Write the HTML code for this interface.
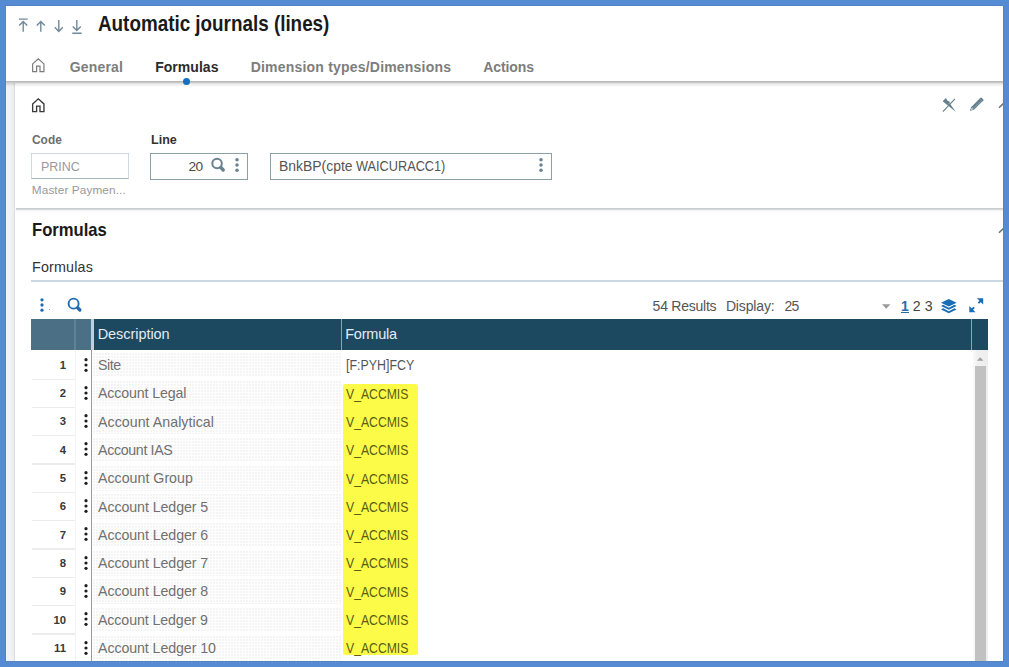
<!DOCTYPE html>
<html lang="en"><head><meta charset="utf-8"><title>Automatic journals (lines)</title>
<style>
html,body{margin:0;padding:0}
body{width:1009px;height:667px;overflow:hidden;background:#548bd2;position:relative;font-family:"Liberation Sans",sans-serif;}
#frame{position:absolute;left:6px;top:6px;width:997px;height:655px;background:#fff;overflow:hidden;box-shadow:0 0 0 1px #5584c5}
#page{position:absolute;left:-6px;top:-6px;width:1009px;height:667px}
.abs{position:absolute}
.t{position:absolute;white-space:pre;color:#333}
.b{font-weight:bold}
h1,h2{margin:0;padding:0}
svg{position:absolute;overflow:visible}
.dots{background-color:#fff;background-image:radial-gradient(circle at 1px 1px,#e2e2e2 0.45px,rgba(226,226,226,0) 0.85px);background-size:3px 3px}
</style></head><body>
<div id="frame"><div id="page">

<div class="abs" style="left:6px;top:6px;width:997px;height:76px;background:#fff"></div>
<div class="abs" style="left:6px;top:82px;width:997px;height:585px;background:linear-gradient(90deg,#edf4f9 0,#f1f2f7 2px,#f1f2f6 6px,#eaeded 7.5px)"></div>
<div class="abs" style="left:14.1px;top:83px;width:1000px;height:125.5px;background:#fff;border-left:1.8px solid #dcdfe2"></div>
<div class="abs" style="left:14.1px;top:210px;width:1000px;height:460px;background:#fff;border-left:1.8px solid #dcdfe2"></div>
<div class="abs" style="left:6px;top:80.8px;width:997px;height:1.4px;background:#bababa"></div>
<div class="abs" style="left:6px;top:82.2px;width:997px;height:4.5px;background:linear-gradient(rgba(0,0,0,.18),rgba(0,0,0,.07) 50%,rgba(0,0,0,0))"></div>
<div class="abs" style="left:16px;top:207.8px;width:990px;height:1.4px;background:#cacdd0"></div>
<div class="abs" style="left:16px;top:209.2px;width:990px;height:3px;background:linear-gradient(rgba(0,0,0,.10),rgba(0,0,0,0))"></div>
<svg style="left:17px;top:17px" width="70" height="18" viewBox="17 17 70 18" fill="none" stroke="#71899a" stroke-width="1.4" stroke-linecap="butt">
<path d="M18.9 19.1h8.7M23.2 21.3v10.5M19.2 25.5l4-4.1 4 4.1"/>
<path d="M40.8 21.3v10.4M36.8 25.5l4-4.1 4 4.1"/>
<path d="M58.8 20v11.2M54.8 27.3l4 4.1 4-4.1"/>
<path d="M76.8 20v10.4M72.8 26.5l4 4.1 4-4.1M72.3 33.3h9.3"/>
</svg>
<h1 class="t b" style="left:98.3px;top:11.80px;font-size:21.2px;line-height:24px;transform:scaleX(0.8893);transform-origin:0 50%;color:#1a1a1a;">Automatic journals (lines)</h1>
<svg style="left:32.3px;top:57.65px" width="12.6" height="14.3" viewBox="0 0 12.6 14.3" fill="none" stroke="#7c7c7c" stroke-width="1.2" stroke-linejoin="miter"><path d="M0.65 5.9L6.3 0.85 11.95 5.9V13.65H8V8.2H4.6V13.65H0.65z"/></svg>
<div class="t b" style="left:69.7px;top:57.30px;font-size:14.0px;line-height:20px;letter-spacing:0.194px;color:#7d7d7d">General</div>
<div class="t b" style="left:155.2px;top:57.30px;font-size:14.0px;line-height:20px;letter-spacing:0.041px;color:#2b2b2b">Formulas</div>
<div class="t b" style="left:250.7px;top:57.30px;font-size:14.0px;line-height:20px;letter-spacing:0.201px;color:#7d7d7d">Dimension types/Dimensions</div>
<div class="t b" style="left:483.2px;top:57.30px;font-size:14.0px;line-height:20px;letter-spacing:-0.090px;color:#7d7d7d">Actions</div>
<div class="abs" style="left:182.7px;top:78.3px;width:7.2px;height:7.2px;border-radius:50%;background:#1470bd"></div>
<svg style="left:32.2px;top:97.7px" width="12.6" height="14.3" viewBox="0 0 12.6 14.3" fill="none" stroke="#3a3a3a" stroke-width="1.35" stroke-linejoin="miter"><path d="M0.65 5.9L6.3 0.85 11.95 5.9V13.65H8V8.2H4.6V13.65H0.65z"/></svg>
<div class="t b" style="left:31.9px;top:129.80px;font-size:13.6px;line-height:20px;transform:scaleX(0.8764);transform-origin:0 50%;color:#6e6e6e;">Code</div>
<div class="t b" style="left:151.3px;top:129.80px;font-size:13.6px;line-height:20px;transform:scaleX(0.9228);transform-origin:0 50%;color:#333;">Line</div>
<div class="abs" style="left:31px;top:153.2px;width:95.6px;height:23.4px;border:1px solid #d0d9de;border-bottom:1.8px solid #a6b6be;background:#fff"></div>
<div class="abs" style="left:150.4px;top:153px;width:95.6px;height:25px;border:1px solid #8a9fa9;background:#fff"></div>
<div class="abs" style="left:270px;top:153px;width:279.5px;height:25px;border:1px solid #8a9fa9;background:#fff"></div>
<div class="t " style="left:40.5px;top:156.80px;font-size:13.7px;line-height:20px;transform:scaleX(0.9126);transform-origin:0 50%;color:#9a9a9a;">PRINC</div>
<div class="t " style="left:188.6px;top:156.80px;font-size:13.7px;line-height:20px;letter-spacing:-0.739px;color:#4a4a4a">20</div>
<span class="t " style="left:279.4px;top:156.30px;font-size:13.9px;line-height:20px;transform:scaleX(1.0031);transform-origin:0 50%;color:#555;">BnkBP(cpte </span>
<span class="t " style="left:355.6px;top:156.30px;font-size:13.9px;line-height:20px;transform:scaleX(0.9164);transform-origin:0 50%;color:#555;">WAICURACC1)</span>
<div class="t " style="left:31.8px;top:180.30px;font-size:11.8px;line-height:20px;letter-spacing:0.096px;color:#999">Master Paymen...</div>
<svg style="left:0;top:0" width="1009" height="667" viewBox="0 0 1009 667" fill="none" stroke="#68828e"><circle cx="217.05" cy="163.5" r="4.75" stroke-width="2.0"/><path d="M220.88 167.51L223.26 170.01" stroke-width="3.3" stroke-linecap="round"/></svg>
<svg style="left:234.1px;top:157.1px" width="6" height="16" viewBox="-3 -8 6 16" fill="#68828e"><circle cx="0" cy="-5.15" r="1.75"/><circle cx="0" cy="0" r="1.75"/><circle cx="0" cy="5.15" r="1.75"/></svg>
<svg style="left:538px;top:157.3px" width="6" height="16" viewBox="-3 -8 6 16" fill="#68828e"><circle cx="0" cy="-5.2" r="1.75"/><circle cx="0" cy="0" r="1.75"/><circle cx="0" cy="5.2" r="1.75"/></svg>
<svg style="left:941px;top:97px" width="16" height="16" viewBox="0 0 16 16"><g fill="#647f8c" stroke="none"><path d="M1.7 4.3L4.9 0.9 6.3 3.6 9.1 4.9 6.4 8.3 4.4 6.4z"/><path d="M6.3 7.9L8.4 6.1 15 15z"/></g><path d="M13.9 1.8L1.9 14.6" stroke="#647f8c" stroke-width="1.15" fill="none"/></svg>
<svg style="left:969px;top:97px" width="15" height="15" viewBox="0 0 15 15"><path d="M3.9 11.1L12.1 2.9" stroke="#647f8c" stroke-width="3.8" stroke-linecap="butt" fill="none"/><path d="M10.6 1.4l0.5-0.5a1.2 1.2 0 0 1 1.7 0l1.3 1.3a1.2 1.2 0 0 1 0 1.7l-0.5 0.5z" fill="#647f8c"/><path d="M0.9 14.1L2.4 9.6 5.4 12.6z" fill="#647f8c"/><circle cx="2.9" cy="12.1" r="0.8" fill="#fff"/><path d="M4.6 11.3L11.6 4.3" stroke="#9fb2bb" stroke-width="0.6" fill="none"/></svg>
<svg style="left:997.8px;top:100.8px" width="12" height="8" viewBox="0 0 12 8"><path d="M1 6.8L6.5 1.3 12 6.8" fill="none" stroke="#687780" stroke-width="1.6"/></svg>
<svg style="left:997.8px;top:226.3px" width="12" height="8" viewBox="0 0 12 8"><path d="M1 6.8L6.5 1.3 12 6.8" fill="none" stroke="#687780" stroke-width="1.6"/></svg>
<h2 class="t b" style="left:32px;top:219.30px;font-size:18.2px;line-height:22px;transform:scaleX(0.9131);transform-origin:0 50%;color:#1a1a1a;">Formulas</h2>
<div class="t " style="left:32px;top:257.30px;font-size:14.3px;line-height:20px;letter-spacing:0.172px;color:#333;">Formulas</div>
<div class="abs" style="left:31px;top:280.4px;width:975px;height:2px;background:#cbd8e1"></div>
<svg style="left:38.9px;top:296.7px" width="6" height="16" viewBox="-3 -8 6 16" fill="#1f6cb0"><circle cx="0" cy="-5.15" r="1.65"/><circle cx="0" cy="0" r="1.65"/><circle cx="0" cy="5.15" r="1.65"/></svg>
<div class="abs" style="left:48.5px;top:309.3px;width:1.2px;height:1.2px;background:#9ab"></div>
<svg style="left:0;top:0" width="1009" height="667" viewBox="0 0 1009 667" fill="none" stroke="#1f6cb0"><circle cx="73.6" cy="303.65" r="5.00" stroke-width="1.9"/><path d="M77.62 307.76L79.85 310.02" stroke-width="3.3" stroke-linecap="round"/></svg>
<div class="t " style="left:652.6px;top:296.30px;font-size:14px;line-height:20px;letter-spacing:-0.238px;color:#555">54 Results</div>
<div class="t " style="left:725.9px;top:296.30px;font-size:14px;line-height:20px;letter-spacing:-0.142px;color:#555">Display:</div>
<div class="t " style="left:784.5px;top:296.30px;font-size:14px;line-height:20px;letter-spacing:-0.873px;color:#555">25</div>
<svg style="left:882.3px;top:303.7px" width="9" height="6" viewBox="0 0 9 6"><path d="M0 0.2h8.4L4.2 4.8z" fill="#9a9a9a"/></svg>
<div class="t b" style="left:901.0px;top:296.30px;font-size:14.0px;line-height:20px;color:#2a6ca6;">1</div>
<div class="abs" style="left:900.6px;top:311.9px;width:8px;height:1.3px;background:#2a6ca6"></div>
<div class="t " style="left:912.7px;top:296.30px;font-size:14.2px;line-height:20px;color:#444">2</div>
<div class="t " style="left:924.7px;top:296.30px;font-size:14.2px;line-height:20px;color:#444">3</div>
<svg style="left:941px;top:299px" width="15.6" height="14.6" viewBox="0 0 16 15" fill="#1a6db7"><path d="M8 0L16 3.9 8 7.8 0 3.9z"/><path d="M2.2 6L0 7.1 8 11 16 7.1 13.8 6 8 8.9z"/><path d="M2.2 9.6L0 10.7 8 14.6 16 10.7 13.8 9.6 8 12.5z"/></svg>
<svg style="left:969px;top:298px" width="14.5" height="14.5" viewBox="0 0 14.5 14.5" fill="#1a6db7" stroke="#1a6db7"><path d="M7.9 0.3h6.3v6.3z" stroke="none"/><path d="M12.4 2.1L9.4 5.1" stroke-width="2" fill="none"/><path d="M0.3 7.9v6.3h6.3z" stroke="none"/><path d="M2.1 12.4L5.1 9.4" stroke-width="2" fill="none"/></svg>
<div class="abs" style="left:31px;top:318.5px;width:957px;height:31.3px;background:#1c4960"></div>
<div class="abs" style="left:31px;top:318.5px;width:61px;height:31.3px;background:#4b6f85"></div>
<div class="abs" style="left:74.3px;top:318.5px;width:1.4px;height:31.3px;background:#5f8396"></div>
<div class="abs" style="left:91.2px;top:318.5px;width:2.4px;height:31.3px;background:#c3cfd5"></div>
<div class="abs" style="left:340.8px;top:318.5px;width:1px;height:31.3px;background:#8fa5b2"></div>
<div class="abs" style="left:971.3px;top:318.5px;width:1px;height:31.3px;background:#8fa5b2"></div>
<div class="t " style="left:97.7px;top:324.30px;font-size:14.5px;line-height:20px;letter-spacing:-0.053px;color:#e2ecf2">Description</div>
<div class="t " style="left:345.2px;top:324.30px;font-size:14.5px;line-height:20px;letter-spacing:-0.197px;color:#e2ecf2">Formula</div>
<div class="abs" style="left:343.3px;top:384.3px;width:74.6px;height:270.4px;background:#fbfb48;border-radius:2px 3px 2px 2px"></div>
<div class="abs" style="left:90.9px;top:349.8px;width:1.2px;height:320px;background:#9a9a9a"></div>
<div class="abs" style="left:74.7px;top:349.8px;width:1px;height:320px;background:#f4f4f4"></div>
<div class="abs dots" style="left:93px;top:352.57px;width:247.5px;height:24.73px"></div>
<div class="abs" style="left:31.5px;top:378.50px;width:43.5px;height:1.2px;background:#ececec"></div>
<div class="t b" style="left:31px;width:35.0px;text-align:right;top:355.30px;font-size:11.3px;line-height:20px;color:#383838">1</div>
<svg style="left:83.0px;top:356.5px" width="6" height="16" viewBox="-3 -8 6 16" fill="#1e1e1e"><circle cx="0" cy="-5.3" r="1.6"/><circle cx="0" cy="0" r="1.6"/><circle cx="0" cy="5.3" r="1.6"/></svg>
<div class="t " style="left:98px;top:355.30px;font-size:14.2px;line-height:20px;letter-spacing:-0.456px;color:#707070">Site</div>
<div class="t " style="left:346.3px;top:355.30px;font-size:14.1px;line-height:20px;transform:scaleX(0.8793);transform-origin:0 50%;color:#555;">[F:PYH]FCY</div>
<div class="abs dots" style="left:93px;top:380.90px;width:247.5px;height:24.73px"></div>
<div class="abs" style="left:31.5px;top:406.83px;width:43.5px;height:1.2px;background:#ececec"></div>
<div class="t b" style="left:31px;width:35.0px;text-align:right;top:383.30px;font-size:11.3px;line-height:20px;color:#383838">2</div>
<svg style="left:83.0px;top:384.83px" width="6" height="16" viewBox="-3 -8 6 16" fill="#1e1e1e"><circle cx="0" cy="-5.3" r="1.6"/><circle cx="0" cy="0" r="1.6"/><circle cx="0" cy="5.3" r="1.6"/></svg>
<div class="t " style="left:98px;top:383.30px;font-size:14.2px;line-height:20px;letter-spacing:-0.125px;color:#707070">Account Legal</div>
<div class="t " style="left:345.8px;top:384.30px;font-size:14.0px;line-height:20px;transform:scaleX(0.8718);transform-origin:0 50%;color:#5c5c14;">V_ACCMIS</div>
<div class="abs dots" style="left:93px;top:409.23px;width:247.5px;height:24.73px"></div>
<div class="abs" style="left:31.5px;top:435.16px;width:43.5px;height:1.2px;background:#ececec"></div>
<div class="t b" style="left:31px;width:35.0px;text-align:right;top:411.30px;font-size:11.3px;line-height:20px;color:#383838">3</div>
<svg style="left:83.0px;top:413.16px" width="6" height="16" viewBox="-3 -8 6 16" fill="#1e1e1e"><circle cx="0" cy="-5.3" r="1.6"/><circle cx="0" cy="0" r="1.6"/><circle cx="0" cy="5.3" r="1.6"/></svg>
<div class="t " style="left:98px;top:412.30px;font-size:14.2px;line-height:20px;letter-spacing:0.044px;color:#707070">Account Analytical</div>
<div class="t " style="left:345.8px;top:412.30px;font-size:14.0px;line-height:20px;transform:scaleX(0.8718);transform-origin:0 50%;color:#5c5c14;">V_ACCMIS</div>
<div class="abs dots" style="left:93px;top:437.56px;width:247.5px;height:24.73px"></div>
<div class="abs" style="left:31.5px;top:463.49px;width:43.5px;height:1.2px;background:#ececec"></div>
<div class="t b" style="left:31px;width:35.0px;text-align:right;top:440.30px;font-size:11.3px;line-height:20px;color:#383838">4</div>
<svg style="left:83.0px;top:441.49px" width="6" height="16" viewBox="-3 -8 6 16" fill="#1e1e1e"><circle cx="0" cy="-5.3" r="1.6"/><circle cx="0" cy="0" r="1.6"/><circle cx="0" cy="5.3" r="1.6"/></svg>
<div class="t " style="left:98px;top:440.30px;font-size:14.2px;line-height:20px;letter-spacing:-0.324px;color:#707070">Account IAS</div>
<div class="t " style="left:345.8px;top:440.30px;font-size:14.0px;line-height:20px;transform:scaleX(0.8718);transform-origin:0 50%;color:#5c5c14;">V_ACCMIS</div>
<div class="abs dots" style="left:93px;top:465.89px;width:247.5px;height:24.73px"></div>
<div class="abs" style="left:31.5px;top:491.82px;width:43.5px;height:1.2px;background:#ececec"></div>
<div class="t b" style="left:31px;width:35.0px;text-align:right;top:468.30px;font-size:11.3px;line-height:20px;color:#383838">5</div>
<svg style="left:83.0px;top:469.82px" width="6" height="16" viewBox="-3 -8 6 16" fill="#1e1e1e"><circle cx="0" cy="-5.3" r="1.6"/><circle cx="0" cy="0" r="1.6"/><circle cx="0" cy="5.3" r="1.6"/></svg>
<div class="t " style="left:98px;top:468.30px;font-size:14.2px;line-height:20px;letter-spacing:0.015px;color:#707070">Account Group</div>
<div class="t " style="left:345.8px;top:469.30px;font-size:14.0px;line-height:20px;transform:scaleX(0.8718);transform-origin:0 50%;color:#5c5c14;">V_ACCMIS</div>
<div class="abs dots" style="left:93px;top:494.22px;width:247.5px;height:24.73px"></div>
<div class="abs" style="left:31.5px;top:520.15px;width:43.5px;height:1.2px;background:#ececec"></div>
<div class="t b" style="left:31px;width:35.0px;text-align:right;top:496.30px;font-size:11.3px;line-height:20px;color:#383838">6</div>
<svg style="left:83.0px;top:498.15px" width="6" height="16" viewBox="-3 -8 6 16" fill="#1e1e1e"><circle cx="0" cy="-5.3" r="1.6"/><circle cx="0" cy="0" r="1.6"/><circle cx="0" cy="5.3" r="1.6"/></svg>
<div class="t " style="left:98px;top:497.30px;font-size:14.2px;line-height:20px;letter-spacing:-0.068px;color:#707070">Account Ledger 5</div>
<div class="t " style="left:345.8px;top:497.30px;font-size:14.0px;line-height:20px;transform:scaleX(0.8718);transform-origin:0 50%;color:#5c5c14;">V_ACCMIS</div>
<div class="abs dots" style="left:93px;top:522.55px;width:247.5px;height:24.73px"></div>
<div class="abs" style="left:31.5px;top:548.48px;width:43.5px;height:1.2px;background:#ececec"></div>
<div class="t b" style="left:31px;width:35.0px;text-align:right;top:525.30px;font-size:11.3px;line-height:20px;color:#383838">7</div>
<svg style="left:83.0px;top:526.48px" width="6" height="16" viewBox="-3 -8 6 16" fill="#1e1e1e"><circle cx="0" cy="-5.3" r="1.6"/><circle cx="0" cy="0" r="1.6"/><circle cx="0" cy="5.3" r="1.6"/></svg>
<div class="t " style="left:98px;top:525.30px;font-size:14.2px;line-height:20px;letter-spacing:-0.068px;color:#707070">Account Ledger 6</div>
<div class="t " style="left:345.8px;top:525.30px;font-size:14.0px;line-height:20px;transform:scaleX(0.8718);transform-origin:0 50%;color:#5c5c14;">V_ACCMIS</div>
<div class="abs dots" style="left:93px;top:550.88px;width:247.5px;height:24.73px"></div>
<div class="abs" style="left:31.5px;top:576.81px;width:43.5px;height:1.2px;background:#ececec"></div>
<div class="t b" style="left:31px;width:35.0px;text-align:right;top:553.30px;font-size:11.3px;line-height:20px;color:#383838">8</div>
<svg style="left:83.0px;top:554.81px" width="6" height="16" viewBox="-3 -8 6 16" fill="#1e1e1e"><circle cx="0" cy="-5.3" r="1.6"/><circle cx="0" cy="0" r="1.6"/><circle cx="0" cy="5.3" r="1.6"/></svg>
<div class="t " style="left:98px;top:553.30px;font-size:14.2px;line-height:20px;letter-spacing:-0.068px;color:#707070">Account Ledger 7</div>
<div class="t " style="left:345.8px;top:553.30px;font-size:14.0px;line-height:20px;transform:scaleX(0.8718);transform-origin:0 50%;color:#5c5c14;">V_ACCMIS</div>
<div class="abs dots" style="left:93px;top:579.21px;width:247.5px;height:24.73px"></div>
<div class="abs" style="left:31.5px;top:605.14px;width:43.5px;height:1.2px;background:#ececec"></div>
<div class="t b" style="left:31px;width:35.0px;text-align:right;top:581.30px;font-size:11.3px;line-height:20px;color:#383838">9</div>
<svg style="left:83.0px;top:583.14px" width="6" height="16" viewBox="-3 -8 6 16" fill="#1e1e1e"><circle cx="0" cy="-5.3" r="1.6"/><circle cx="0" cy="0" r="1.6"/><circle cx="0" cy="5.3" r="1.6"/></svg>
<div class="t " style="left:98px;top:581.30px;font-size:14.2px;line-height:20px;letter-spacing:-0.068px;color:#707070">Account Ledger 8</div>
<div class="t " style="left:345.8px;top:582.30px;font-size:14.0px;line-height:20px;transform:scaleX(0.8718);transform-origin:0 50%;color:#5c5c14;">V_ACCMIS</div>
<div class="abs dots" style="left:93px;top:607.54px;width:247.5px;height:24.73px"></div>
<div class="abs" style="left:31.5px;top:633.47px;width:43.5px;height:1.2px;background:#ececec"></div>
<div class="t b" style="left:31px;width:35.0px;text-align:right;top:610.30px;font-size:11.3px;line-height:20px;color:#383838">10</div>
<svg style="left:83.0px;top:611.47px" width="6" height="16" viewBox="-3 -8 6 16" fill="#1e1e1e"><circle cx="0" cy="-5.3" r="1.6"/><circle cx="0" cy="0" r="1.6"/><circle cx="0" cy="5.3" r="1.6"/></svg>
<div class="t " style="left:98px;top:610.30px;font-size:14.2px;line-height:20px;letter-spacing:-0.094px;color:#707070">Account Ledger 9</div>
<div class="t " style="left:345.8px;top:610.30px;font-size:14.0px;line-height:20px;transform:scaleX(0.8718);transform-origin:0 50%;color:#5c5c14;">V_ACCMIS</div>
<div class="abs dots" style="left:93px;top:635.87px;width:247.5px;height:24.73px"></div>
<div class="abs" style="left:31.5px;top:661.80px;width:43.5px;height:1.2px;background:#ececec"></div>
<div class="t b" style="left:31px;width:35.0px;text-align:right;top:638.30px;font-size:11.3px;line-height:20px;color:#383838">11</div>
<svg style="left:83.0px;top:639.8px" width="6" height="16" viewBox="-3 -8 6 16" fill="#1e1e1e"><circle cx="0" cy="-5.3" r="1.6"/><circle cx="0" cy="0" r="1.6"/><circle cx="0" cy="5.3" r="1.6"/></svg>
<div class="t " style="left:98px;top:638.30px;font-size:14.2px;line-height:20px;letter-spacing:-0.076px;color:#707070">Account Ledger 10</div>
<div class="t " style="left:345.8px;top:638.30px;font-size:14.0px;line-height:20px;transform:scaleX(0.8718);transform-origin:0 50%;color:#5c5c14;">V_ACCMIS</div>
<div class="abs" style="left:972.5px;top:349.8px;width:15.3px;height:320px;background:linear-gradient(90deg,#fafafa,#f0f0f0 30%,#eee)"></div>
<svg style="left:976.9px;top:356.8px" width="6.4" height="4" viewBox="0 0 8 5"><path d="M0 4.8L4 0.2 8 4.8z" fill="#a0a0a0"/></svg>
<div class="abs" style="left:975px;top:366px;width:10.9px;height:300px;background:#c1c1c1"></div>
</div></div>
</body></html>
